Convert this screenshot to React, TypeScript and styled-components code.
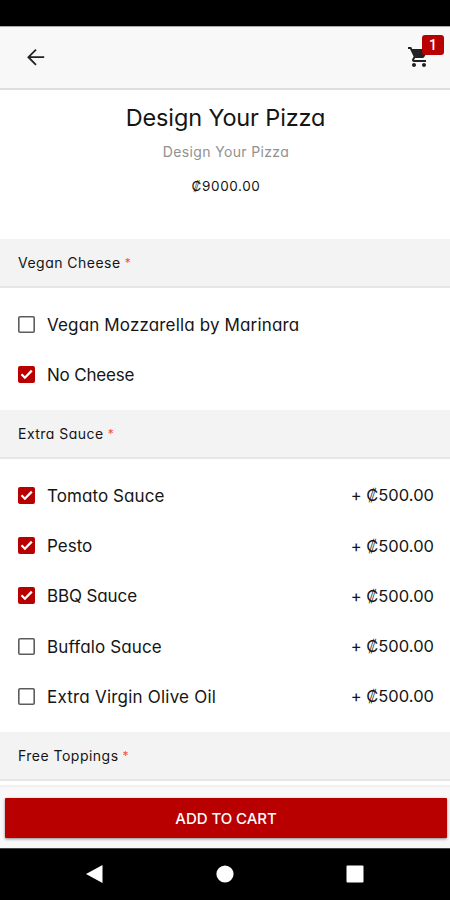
import React from "react";
import styled, { createGlobalStyle } from "styled-components";

const Global = createGlobalStyle`
  * { box-sizing: border-box; }
  body { margin: 0; background: #fff; }
`;

const Screen = styled.div`
  width: 450px;
  height: 900px;
  display: flex;
  flex-direction: column;
  overflow: hidden;
  background: #fff;
  color: #151515;
  font-family: Inter, "Noto Sans", sans-serif;
  font-feature-settings: "cv11", "calt" 0;
  white-space: nowrap;
`;

const StatusBar = styled.div`
  flex: none;
  height: 26px;
  background: #000;
`;

const Header = styled.header`
  flex: none;
  height: 64px;
  display: flex;
  align-items: center;
  justify-content: space-between;
  padding: 0 19px 1px 26px;
  background: #f8f8f8;
  border-top: 1px solid #a8a8a8;
  border-bottom: 2px solid #dedede;
`;

const IconButton = styled.button`
  position: relative;
  display: flex;
  padding: 0;
  border: 0;
  background: none;
  font: inherit;
`;

const Badge = styled.span`
  position: absolute;
  left: 15px;
  top: -10px;
  width: 22px;
  height: 20px;
  display: flex;
  align-items: center;
  justify-content: center;
  border-radius: 3px;
  background: #b90000;
  color: #fff;
  font: 500 14px Roboto, sans-serif;
`;

const Intro = styled.section`
  flex: none;
  height: 149px;
  display: flex;
  flex-direction: column;
  align-items: center;
`;

const Title = styled.h1`
  margin: 12px 0 0;
  padding-left: 1px;
  font-size: 23.5px;
  line-height: 32px;
  font-weight: 380;
  letter-spacing: -0.14px;
`;

const Subtitle = styled.p`
  margin: 6px 0 0;
  padding-left: 2px;
  color: #919191;
  font-size: 14px;
  line-height: 24px;
  font-weight: 380;
  letter-spacing: 0.35px;
`;

const BasePrice = styled.p`
  margin: 10px 0 0;
  padding-left: 2px;
  font-size: 13.5px;
  line-height: 24px;
  font-weight: 380;
  letter-spacing: 0.6px;
`;

const GroupHeader = styled.h2`
  flex: none;
  margin: 0;
  height: 49px;
  display: flex;
  align-items: center;
  padding: 0 18px;
  background: #f3f3f3;
  border-bottom: 2px solid #e6e6e6;
  font-size: 14px;
  font-weight: 380;
  letter-spacing: 0.48px;
`;

const Required = styled.span`
  margin-left: 4px;
  color: #ff4b40;
  font-size: 12px;
`;

const OptionList = styled.ul`
  flex: none;
  margin: 0;
  padding: 11px 16px 10.5px 18px;
  list-style: none;
`;

const Option = styled.li`
  height: 50.3px;
  display: flex;
  align-items: center;
  font-size: 17px;
  line-height: 22px;
  font-weight: 380;
`;

const Box = styled.span<{ $on: boolean }>`
  width: 17px;
  height: 17px;
  margin-right: 12px;
  display: flex;
  align-items: center;
  justify-content: center;
  border-radius: 2px;
  background: ${(p) => (p.$on ? "#b90000" : "#fff")};
  box-shadow: ${(p) => (p.$on ? "none" : "inset 0 0 0 1.6px #5c5c5c")};
`;

const Label = styled.span<{ $track: number }>`
  flex: 1;
  padding-top: 1px;
  letter-spacing: ${(p) => p.$track}px;
`;

const Price = styled.span`
  font-size: 16.5px;
  letter-spacing: 0.02px;
`;

const Footer = styled.footer`
  flex: none;
  height: 63px;
  margin-top: 4px;
  padding: 11px 3px 0 5px;
  background: #f8f8f8;
  border-top: 2px solid #f1f1f1;
`;

const AddButton = styled.button`
  display: block;
  width: 100%;
  height: 40px;
  padding: 0;
  border: 0;
  border-radius: 1px;
  background: #b90000;
  box-shadow: 0 1px 3px rgba(0, 0, 0, 0.45);
  color: #fff;
  font: inherit;
  font-size: 15px;
  font-weight: 550;
  letter-spacing: -0.05px;
`;

const NavBar = styled.nav`
  flex: 1;
  display: flex;
  align-items: center;
  justify-content: space-between;
  padding: 0 86px 1px 85px;
  background: #000;
  border-top: 1px solid #444;
`;

type Item = { name: string; on: boolean; track: number; price?: string };

const cheeses: Item[] = [
  { name: "Vegan Mozzarella by Marinara", on: false, track: 0.15 },
  { name: "No Cheese", on: true, track: -0.2 },
];

const sauces: Item[] = [
  { name: "Tomato Sauce", on: true, track: 0.08, price: "+ ₡500.00" },
  { name: "Pesto", on: true, track: 0, price: "+ ₡500.00" },
  { name: "BBQ Sauce", on: true, track: -0.12, price: "+ ₡500.00" },
  { name: "Buffalo Sauce", on: false, track: 0.14, price: "+ ₡500.00" },
  { name: "Extra Virgin Olive Oil", on: false, track: 0.21, price: "+ ₡500.00" },
];

function Group({ name }: { name: string }) {
  return (
    <GroupHeader>
      <span>{name}</span>
      <Required>*</Required>
    </GroupHeader>
  );
}

function Options({ items }: { items: Item[] }) {
  return (
    <OptionList>
      {items.map((item) => (
        <Option key={item.name}>
          <Box $on={item.on}>
            {item.on && (
              <svg width="17" height="17" viewBox="0 0 17 17" fill="none">
                <path d="M3.5 8.3 6.9 11.7 13.8 4.6" stroke="#fff" strokeWidth="2.3" />
              </svg>
            )}
          </Box>
          <Label $track={item.track}>{item.name}</Label>
          {item.price && <Price>{item.price}</Price>}
        </Option>
      ))}
    </OptionList>
  );
}

export default function App() {
  return (
    <Screen>
      <Global />
      <StatusBar />
      <Header>
        <IconButton aria-label="Back">
          <svg width="19" height="18" viewBox="0 0 19 18" fill="none" stroke="#222" strokeWidth="1.8">
            <path d="M18.2 9.2H2.4M10 1.6 2.4 9.2 10 16.8" />
          </svg>
        </IconButton>
        <IconButton aria-label="Cart">
          <svg width="24" height="24" viewBox="0 0 24 24" fill="#222">
            <path d="M7 18c-1.1 0-1.99.9-1.99 2S5.9 22 7 22s2-.9 2-2-.9-2-2-2zM1 2v2h2l3.6 7.59-1.35 2.45c-.16.28-.25.61-.25.96 0 1.1.9 2 2 2h12v-2H7.42c-.14 0-.25-.11-.25-.25l.03-.12.9-1.63h7.45c.75 0 1.41-.41 1.75-1.03l3.58-6.49A1 1 0 0 0 20 4H5.21l-.94-2H1zm16 16c-1.1 0-1.99.9-1.99 2s.89 2 1.99 2 2-.9 2-2-.9-2-2-2z" />
          </svg>
          <Badge>1</Badge>
        </IconButton>
      </Header>
      <Intro>
        <Title>Design Your Pizza</Title>
        <Subtitle>Design Your Pizza</Subtitle>
        <BasePrice>₡9000.00</BasePrice>
      </Intro>
      <Group name="Vegan Cheese" />
      <Options items={cheeses} />
      <Group name="Extra Sauce" />
      <Options items={sauces} />
      <Group name="Free Toppings" />
      <Footer>
        <AddButton>ADD TO CART</AddButton>
      </Footer>
      <NavBar>
        <svg width="18" height="20" viewBox="0 0 18 20" fill="#fff">
          <path d="M1 10 17.5 1v18z" />
        </svg>
        <svg width="18" height="18" viewBox="0 0 18 18" fill="#fff">
          <circle cx="9" cy="9" r="8.6" />
        </svg>
        <svg width="18" height="18" viewBox="0 0 18 18" fill="#fff">
          <rect x="0.5" y="0.5" width="17" height="17" rx="1" />
        </svg>
      </NavBar>
    </Screen>
  );
}
